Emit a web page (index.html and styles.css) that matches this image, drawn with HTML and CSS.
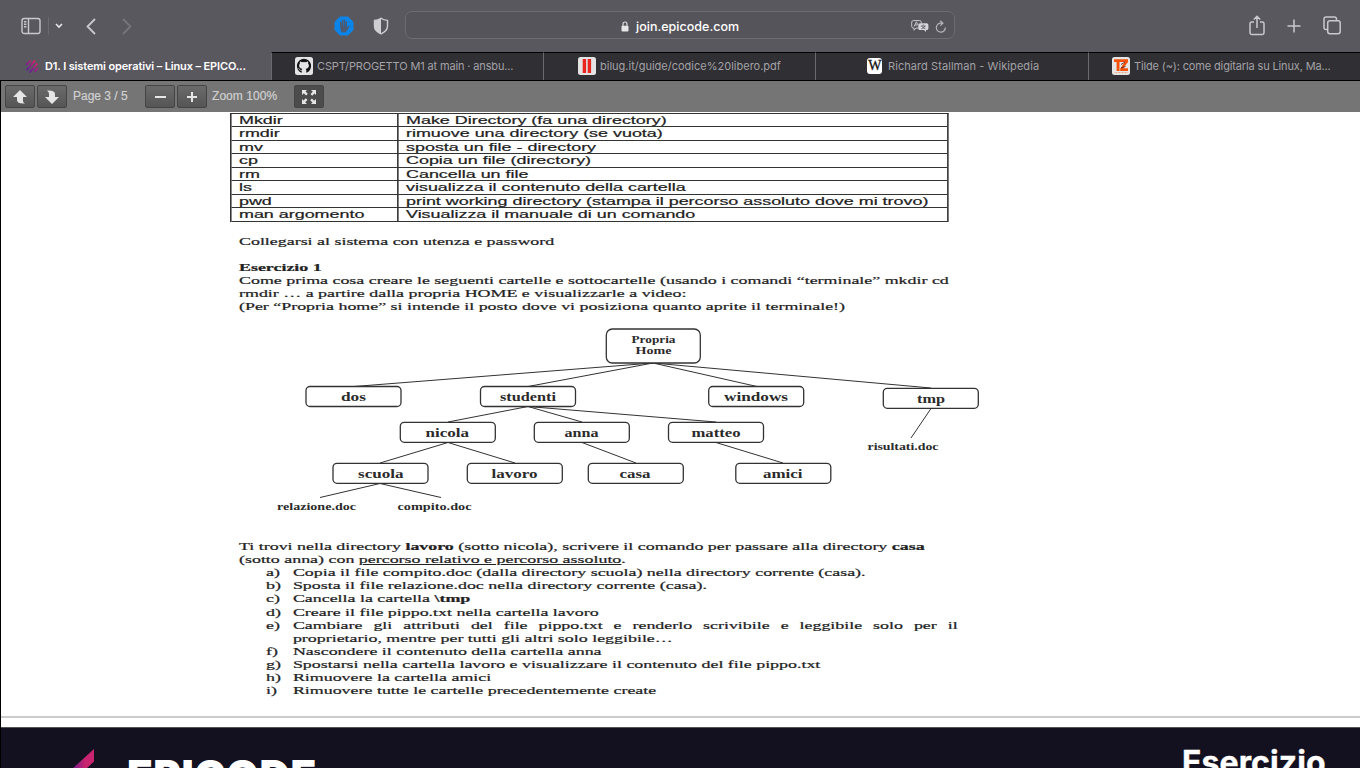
FILE: index.html
```html
<!DOCTYPE html>
<html lang="it">
<head>
<meta charset="utf-8">
<title>D1. I sistemi operativi – Linux – EPICODE</title>
<link rel="stylesheet" href="styles.css">
</head>
<body>
<header class="browser">
  <svg class="ic sidebar" viewBox="0 0 20 18"><rect x="1" y="1.5" width="18" height="15" rx="2.2"/><path d="M7.5 1.5v15M3 4.7h2.4M3 7.2h2.4M3 9.7h2.4"/></svg>
  <span class="divider"></span>
  <svg class="ic drop" viewBox="0 0 8 6"><path d="M1 1l3 3 3-3"/></svg>
  <svg class="ic back" viewBox="0 0 10 17"><path d="M9 1L1.5 8.5 9 16"/></svg>
  <svg class="ic forward" viewBox="0 0 10 17"><path d="M1 1l7.500 7.500L1 16"/></svg>
  <svg class="blocker" viewBox="0 0 20 20"><path class="oct" d="M6 .5h8L19.500 6v8L14 19.500H6L.5 14V6z"/><path class="palm" d="M6.300 9.500h6.600v2.500l2-1.500-2.300 4.500q-1 1.500-3 1.500-2.500 0-3.100-2.500z"/><path class="fingers" d="M6.700 10V6.300M8.500 10V4.600M10.400 10V4.200M12.300 10V5.500M12.500 13.500l2.300-3"/></svg>
  <svg class="shield" viewBox="0 0 16 18"><path class="edge" d="M8 1.200C6 2.600 4 3.200 1.500 3.400V9c0 4 3 6.300 6.500 7.800 3.500-1.500 6.500-3.800 6.500-7.800V3.400C12 3.200 10 2.600 8 1.200z"/><path class="half" d="M8 1.200C6 2.600 4 3.200 1.500 3.400V9c0 4 3 6.300 6.500 7.800z"/></svg>
  <div class="address">
    <svg class="lock" viewBox="0 0 8 11"><path class="shackle" d="M2 5V3a2 2 0 0 1 4 0v2"/><rect x=".5" y="4.700" width="7" height="5.800" rx="1"/></svg>
    <span class="host">join.epicode.com</span>
    <svg class="translate" viewBox="0 0 18 12"><path class="bubble" d="M2.500.6h6q1.800 0 1.800 1.700v.9M7.500 8H5l-2 2.200V8h-.6Q.7 8 .7 6.300v-4Q.7.600 2.500.600M3.200 6.500l2.200-4.700 1.400 3M4 5h2.600"/><path class="solid" d="M9 3.200h6.700q1.700 0 1.700 1.700v3.500q0 1.700-1.700 1.700H15v1.800L13 10.100H9q-1.700 0-1.700-1.700V4.900Q7.300 3.200 9 3.200z"/><path class="glyph" d="M12.300 4.500v1.200M9.800 6h5M10.400 8.800q3-.8 3.500-2.800M10.900 6.300q.7 1.800 3.500 2.500"/></svg>
    <svg class="reload" viewBox="0 0 12 13"><path d="M10.300 7.500A4.500 4.500 0 1 1 6 3.200h1.500M5.300.7L7.900 3.200 5.300 5.600"/></svg>
  </div>
  <svg class="ic share" viewBox="0 0 16 21"><path d="M5 7H2.700Q1 7 1 8.700v9Q1 19.400 2.700 19.400h10.600q1.700 0 1.700-1.700v-9Q15 7 13.300 7H11M8 13V1.400M4.800 4.500L8 1.300l3.200 3.200"/></svg>
  <svg class="ic plus" viewBox="0 0 14 14"><path d="M7 .5v13M.5 7h13"/></svg>
  <svg class="ic windows" viewBox="0 0 18 19"><path d="M4.500 13.500H3.200Q1 13.500 1 11.300V3.200Q1 1 3.200 1h8.100q2.200 0 2.200 2.200v1.300"/><rect x="4.700" y="4.700" width="12.500" height="13" rx="2.200"/></svg>
</header>

<nav class="tabs">
  <div class="tab active t1"><svg class="fav" viewBox="0 0 14 16"><defs><linearGradient id="epi" gradientUnits="userSpaceOnUse" x1="1" x2="12" y1="14" y2="3"><stop stop-color="#4526a0"/><stop offset=".5" stop-color="#8b2485"/><stop offset="1" stop-color="#e32468"/></linearGradient></defs><path d="M1 7.200L5.500 2.700M1.500 12.200L10 2.500M4.500 14.500L12.500 5.500M9.500 14l3.500-3.800" fill="none" stroke="url(#epi)" stroke-width="1.900"/></svg><span>D1. I sistemi operativi – Linux – EPICO...</span></div>
  <div class="tab t2"><svg class="fav" viewBox="0 0 18 18"><rect width="18" height="18" rx="2.500" fill="#e4e4e6"/><path d="M9 1.800a7.200 7.200 0 0 0-2.300 14v-2.300c-2 .4-2.500-.9-2.900-1.500l-.7-.6c.9-.2 1.400.6 1.700 1 .5.700 1.200.7 2 .4l.5-1c-2-.3-3.200-1.400-3.200-3.300 0-.8.300-1.500.8-2.100-.2-.6-.1-1.400.1-2 .8 0 1.500.4 2.100.9a8 8 0 0 1 3.800 0c.6-.5 1.300-.9 2.100-.9.200.6.300 1.400.1 2 .5.600.8 1.300.8 2.100 0 1.900-1.200 3-3.200 3.300.4.400.6.900.6 1.600v2.400A7.200 7.200 0 0 0 9 1.800z" fill="#141416"/></svg><span>CSPT/PROGETTO M1 at main · ansbu...</span></div>
  <div class="tab t3"><svg class="fav" viewBox="0 0 18 18"><rect width="18" height="18" rx="2.500" fill="#e4e4e4"/><path d="M4.700 2h3.400v14H4.700zM9.700 2h3.400v14H9.700z" fill="#e8251f"/></svg><span>bilug.it/guide/codice%20libero.pdf</span></div>
  <div class="tab t4"><b class="wiki">W</b><span>Richard Stallman - Wikipedia</span></div>
  <div class="tab t5"><svg class="fav" viewBox="0 0 18 18"><rect width="18" height="18" rx="2.500" fill="#e6e6e6"/><path d="M2 2.300h14v2.800L11.300 11.300H16v2.600H8.200v-2.500L12.700 5H7.500v8.900H4.600V5H2z" fill="#f4510b"/><path d="M9 7.500l4-2.500M9 11l4.500-1.500" fill="none" stroke="#542a22" stroke-width=".9"/><path d="M2.500 15.600h13" stroke="#f28b62" stroke-width=".8" stroke-dasharray="1 .5"/></svg><span>Tilde (~): come digitarla su Linux, Ma...</span></div>
</nav>

<main class="viewer">
  <div class="pdfbar">
    <span class="btn"><svg viewBox="0 0 16 16"><path d="M8 1l7 7h-4v4q0 1.500 2 2.500Q5 15 5 11V8H1z"/></svg></span>
    <span class="btn b2"><svg viewBox="0 0 16 16"><path d="M8 15L1 8h4V5Q5 2.500 3 1.500 11 1 11 5v3h4z"/></svg></span>
    <span class="label page-no">Page 3 / 5</span>
    <span class="btn b3"><svg viewBox="0 0 16 16"><path d="M3 7h11v2H3z"/></svg></span>
    <span class="btn b2"><svg viewBox="0 0 16 16"><path d="M3 7h4V3h2v4h4v2H9v4H7V9H3z"/></svg></span>
    <span class="label zoom">Zoom 100%</span>
    <span class="btn full"><svg viewBox="0 0 16 16"><path d="M1 1h5L4.500 2.500l2.300 2.300-1.700 1.700-2.300-2.300L1 6zM15 1v5l-1.500-1.500-2.300 2.300-1.700-1.700 2.300-2.300L10 1zM1 15v-5l1.500 1.500 2.300-2.300 1.700 1.700-2.300 2.300L6 15zM15 15h-5l1.500-1.500-2.300-2.300 1.700-1.700 2.300 2.300L15 10z"/></svg></span>
  </div>

  <article class="sheet">
    <div class="wide commands">
      <div class="row"><span>Mkdir</span><span>Make Directory (fa una directory)</span></div>
      <div class="row"><span>rmdir</span><span>rimuove una directory (se vuota)</span></div>
      <div class="row"><span>mv</span><span>sposta un file - directory</span></div>
      <div class="row"><span>cp</span><span>Copia un file (directory)</span></div>
      <div class="row"><span>rm</span><span>Cancella un file</span></div>
      <div class="row"><span>ls</span><span>visualizza il contenuto della cartella</span></div>
      <div class="row"><span>pwd</span><span>print working directory (stampa il percorso assoluto dove mi trovo)</span></div>
      <div class="row"><span>man argomento</span><span>Visualizza il manuale di un comando</span></div>
    </div>

    <div class="wide intro">
      <p>Collegarsi al sistema con utenza e password</p>
      <p class="gap"><b>Esercizio 1</b><br>Come prima cosa creare le seguenti cartelle e sottocartelle (usando i comandi “terminale” mkdir cd<br>rmdir … a partire dalla propria HOME e visualizzarle a video:<br>(Per “Propria home” si intende il posto dove vi posiziona quanto aprite il terminale!)</p>
    </div>

    <svg class="tree" viewBox="239 320 760 200">
      <path class="links" d="M653 363L354 386.500M653 363L528 386.500M653 363L757 386.500M653 363L931 388M528 406.500L448 422M528 406.500L582 422M528 406.500L716 422M448 442.500L380 463M448 442.500L515 463M582 442.500L636 463M716 442.500L783 463M931 408.500L911 438M380 483.500L320 497.500M380 483.500L441 497.500"/>
      <g class="nodes">
        <rect x="606.300" y="329" width="94" height="34" rx="6"/>
        <rect x="306" y="386.500" width="95" height="20" rx="4"/>
        <rect x="480.500" y="386.500" width="95" height="20" rx="4"/>
        <rect x="708.700" y="386.500" width="95" height="20" rx="4"/>
        <rect x="883.300" y="388.300" width="95" height="20" rx="4"/>
        <rect x="400.300" y="422.300" width="95" height="20" rx="4"/>
        <rect x="534.300" y="422.300" width="95" height="20" rx="4"/>
        <rect x="668.500" y="422.300" width="95" height="20" rx="4"/>
        <rect x="333" y="463.300" width="95" height="20" rx="4"/>
        <rect x="467.300" y="463.300" width="95" height="20" rx="4"/>
        <rect x="588.300" y="463.300" width="95" height="20" rx="4"/>
        <rect x="735.800" y="463.300" width="95" height="20" rx="4"/>
      </g>
      <g class="small">
        <text x="631.500" y="343" textLength="44" lengthAdjust="spacingAndGlyphs">Propria</text>
        <text x="635.500" y="354" textLength="36" lengthAdjust="spacingAndGlyphs">Home</text>
        <text x="867.500" y="450" textLength="71" lengthAdjust="spacingAndGlyphs">risultati.doc</text>
        <text x="277" y="510" textLength="79" lengthAdjust="spacingAndGlyphs">relazione.doc</text>
        <text x="397.500" y="510" textLength="74" lengthAdjust="spacingAndGlyphs">compito.doc</text>
      </g>
      <g class="big">
        <text x="341" y="401" textLength="25" lengthAdjust="spacingAndGlyphs">dos</text>
        <text x="500" y="401" textLength="56" lengthAdjust="spacingAndGlyphs">studenti</text>
        <text x="724" y="401" textLength="64" lengthAdjust="spacingAndGlyphs">windows</text>
        <text x="917" y="403" textLength="28" lengthAdjust="spacingAndGlyphs">tmp</text>
        <text x="425.500" y="437" textLength="43.500" lengthAdjust="spacingAndGlyphs">nicola</text>
        <text x="564.500" y="437" textLength="34" lengthAdjust="spacingAndGlyphs">anna</text>
        <text x="691.500" y="437" textLength="49" lengthAdjust="spacingAndGlyphs">matteo</text>
        <text x="358" y="478" textLength="45.500" lengthAdjust="spacingAndGlyphs">scuola</text>
        <text x="491.500" y="478" textLength="46" lengthAdjust="spacingAndGlyphs">lavoro</text>
        <text x="619.500" y="478" textLength="31" lengthAdjust="spacingAndGlyphs">casa</text>
        <text x="763" y="478" textLength="39.500" lengthAdjust="spacingAndGlyphs">amici</text>
      </g>
    </svg>

    <div class="wide tasks">
      <p>Ti trovi nella directory <b>lavoro</b> (sotto nicola), scrivere il comando per passare alla directory <b>casa</b><br>(sotto anna) con <u>percorso relativo e percorso assoluto</u>.</p>
      <dl>
        <dt>a)</dt><dd>Copia il file compito.doc (dalla directory scuola) nella directory corrente (casa).</dd>
        <dt>b)</dt><dd>Sposta il file relazione.doc nella directory corrente (casa).</dd>
        <dt>c)</dt><dd>Cancella la cartella <b>\tmp</b></dd>
        <dt>d)</dt><dd>Creare il file pippo.txt nella cartella lavoro</dd>
        <dt>e)</dt><dd>Cambiare gli attributi del file pippo.txt e renderlo scrivibile e leggibile solo per il proprietario, mentre per tutti gli altri solo leggibile…</dd>
        <dt>f)</dt><dd>Nascondere il contenuto della cartella anna</dd>
        <dt>g)</dt><dd>Spostarsi nella cartella lavoro e visualizzare il contenuto del file pippo.txt</dd>
        <dt>h)</dt><dd>Rimuovere la cartella amici</dd>
        <dt>i)</dt><dd>Rimuovere tutte le cartelle precedentemente create</dd>
      </dl>
    </div>
  </article>

  <section class="next-slide">
    <svg class="mark" viewBox="0 0 22 20"><defs><linearGradient id="mk"><stop stop-color="#6d1b8e"/><stop offset=".6" stop-color="#c9246f"/></linearGradient></defs><path d="M0 20L22 0v12.500L14 20z" fill="url(#mk)"/></svg>
    <span class="brand">EPICODE</span>
    <span class="heading">Esercizio</span>
  </section>
</main>
</body>
</html>
```
FILE: styles.css
```css
* { box-sizing: border-box; }
body {
  margin: 0;
  width: 1360px;
  height: 768px;
  overflow: hidden;
  background: #fff;
  font-family: Inter, "Liberation Sans", sans-serif;
}
svg { display: block; flex: none; }
p, dl, dd { margin: 0; }

/* Browser toolbar */
.browser {
  display: flex;
  align-items: center;
  height: 52px;
  padding-left: 21px;
  background: #5a585f;
}
.ic { fill: none; stroke: #c9c8cd; stroke-width: 1.5; }
.sidebar { width: 20px; height: 18px; stroke-width: 1.4; }
.divider { width: 1px; height: 18px; margin-left: 7px; background: #6b6970; }
.drop { width: 8px; height: 6px; margin-left: 6px; stroke: #e6e6ea; stroke-width: 1.6; }
.back { width: 10px; height: 17px; margin-left: 23px; stroke-width: 1.8; }
.forward { width: 10px; height: 17px; margin-left: 26px; stroke: #77757c; stroke-width: 1.8; }
.blocker { width: 20px; height: 20px; margin-left: 202px; }
.oct { fill: #0a84e9; }
.palm { fill: #4b5a70; }
.fingers { fill: none; stroke: #4b5a70; stroke-width: 1.4; stroke-linecap: round; }
.shield { width: 16px; height: 18px; margin-left: 19px; }
.edge { fill: none; stroke: #cfced3; stroke-width: 1.4; }
.half { fill: #cfced3; }
.address {
  display: flex;
  align-items: center;
  width: 550px;
  height: 28px;
  margin: -2px 0 0 16px;
  padding-left: 215px;
  border: 1px solid #6d6b72;
  border-radius: 7px;
  background: #56545b;
}
.lock { width: 8px; height: 11px; margin-top: 3px; fill: #e6e6e8; }
.shackle { fill: none; stroke: #e6e6e8; stroke-width: 1.1; }
.host { width: 104px; margin: 2px 0 0 7px; font-size: 12.5px; font-weight: 500; color: #fff; white-space: nowrap; letter-spacing: .02px; }
.translate { width: 18px; height: 12px; margin: 1px 0 0 171px; }
.bubble { fill: none; stroke: #c9c8cd; stroke-width: 1; }
.solid { fill: #d8d7dc; }
.glyph { fill: none; stroke: #56545b; stroke-width: .8; }
.reload { width: 12px; height: 13px; margin: 2px 0 0 6px; fill: none; stroke: #b5b4b9; stroke-width: 1.2; }
.share { width: 16px; height: 21px; margin: -2px 0 0 294px; }
.plus { width: 14px; height: 14px; margin-left: 22px; }
.windows { width: 18px; height: 19px; margin: -1px 0 0 22px; }

/* Tab strip */
.tabs {
  display: grid;
  grid-template-columns: 271px 272px 272px 273px 272px;
  height: 29px;
  border-bottom: 1px solid #000;
  background: #5a585f;
}
.tab {
  display: flex;
  align-items: center;
  border-top: 1px solid #000;
  border-left: 1px solid #6a6970;
  background: #302f34;
  color: #a3a2a6;
  font-size: 11px;
  white-space: nowrap;
}
.tab span { margin: -1px 0 0 4px; }
.active { border-color: transparent; background: none; color: #fff; font-weight: 600; }
.fav { width: 18px; height: 18px; margin-top: -1px; }
.t1 { padding-left: 24px; letter-spacing: -.13px; }
.t1 .fav { width: 14px; height: 16px; }
.t1 span { margin-left: 6px; }
.t2 { padding-left: 23px; letter-spacing: -.14px; }
.t3 { padding-left: 34px; }
.t4 { padding-left: 51px; letter-spacing: .07px; }
.t5 { padding-left: 23px; letter-spacing: -.14px; }
.wiki {
  width: 15px;
  height: 16px;
  margin-top: -1px;
  border-radius: 3px;
  background: #fff;
  color: #111;
  font: 400 14px/16px "Liberation Serif", serif;
  -webkit-text-stroke: .3px #111;
  text-align: center;
  text-indent: .5px;
  letter-spacing: 0;
}
.t4 .wiki + span { margin-left: 6px; }

/* PDF viewer */
.viewer { height: 687px; border-left: 1px solid #000; }
.pdfbar {
  display: flex;
  align-items: center;
  height: 31px;
  padding-left: 4px;
  background: #757575;
}
.btn {
  display: flex;
  align-items: center;
  justify-content: center;
  width: 30px;
  height: 23px;
  border: 1px solid #454545;
  border-radius: 2px;
  background: linear-gradient(#6b6b6b, #555);
}
.btn svg { width: 16px; height: 16px; fill: #e6e6e6; }
.b2 { margin-left: 2px; }
.b3 { margin-left: 17px; }
.label { margin-top: -1px; color: #d0d0d0; font: 12px/20px "Liberation Sans", Arial, sans-serif; white-space: nowrap; -webkit-text-stroke: .2px #d0d0d0; }
.page-no { width: 55px; margin-left: 6px; }
.zoom { width: 66px; margin-left: 5px; letter-spacing: .05px; }
.full { margin-left: 16px; background: #4c4c4c; }

.sheet {
  height: 606px;
  padding-left: 238px;
  overflow: hidden;
  border-bottom: 2px solid #ccc;
  background: #fff;
  color: #222;
}
/* The scanned page is stretched horizontally */
.wide {
  width: 456px;
  transform: scaleX(1.576);
  transform-origin: 0 0;
  font: 11.36px/13.09px "Liberation Serif", "Times New Roman", serif;
  -webkit-text-stroke: .22px #222;
}
.commands {
  margin: 1px 0 0 -9px;
  border: solid #333;
  border-width: 1px 1px 0;
  font-family: "Liberation Sans", Arial, sans-serif;
}
.row { display: grid; grid-template-columns: 105px 1fr; height: 13.46px; border-bottom: 1px solid #333; line-height: 13px; white-space: nowrap; }
.row span { padding-left: 4.7px; }
.row span + span { border-left: 1px solid #333; }
.intro { padding-top: 12.9px; white-space: nowrap; }
.gap { margin-top: 13.09px; }
.tree { width: 760px; height: 200px; margin-top: 7px; }
.links { fill: none; stroke: #333; stroke-width: 1; }
.nodes { fill: #fff; stroke: #333; stroke-width: 1.3; }
.tree text { fill: #2b2b2b; font-family: "Liberation Serif", "Times New Roman", serif; font-weight: 700; }
.small { font-size: 9.5px; }
.big { font-size: 11.5px; }
.tasks { margin-top: 20px; }
.tasks p { white-space: nowrap; }
.tasks dl { display: grid; grid-template-columns: 17.1px 1fr; padding-left: 17.1px; }
.tasks dd { text-align: justify; }

.next-slide {
  display: flex;
  align-items: flex-start;
  height: 41px;
  margin-top: 9px;
  padding-left: 71px;
  overflow: hidden;
  border-top: 1px solid #555;
  background: #13111f;
  color: #fff;
}
.mark { width: 22px; height: 20px; margin-top: 21px; }
.brand { width: 192px; margin: 28px 0 0 33px; font-size: 42px; font-weight: 900; line-height: 40px; letter-spacing: .6px; }
.heading { margin: 16px 0 0 863px; font-size: 32px; font-weight: 700; line-height: 38px; letter-spacing: .1px; -webkit-text-stroke: .4px #fff; }
```
